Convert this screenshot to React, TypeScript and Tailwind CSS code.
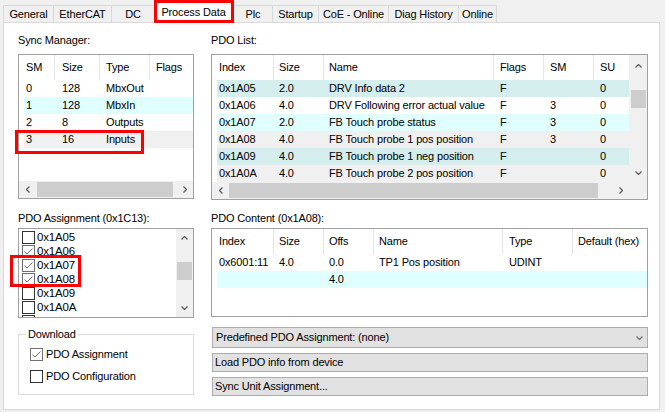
import React from 'react';

function ChevUp() {
  return (
    <svg width="7" height="4" viewBox="0 0 7 4" className="block">
      <path d="M0.5 3.5L3.5 0.5L6.5 3.5" fill="none" stroke="#606060" strokeWidth="1.3" />
    </svg>
  );
}
function ChevDown({ color = '#606060' }: { color?: string }) {
  return (
    <svg width="7" height="4" viewBox="0 0 7 4" className="block">
      <path d="M0.5 0.5L3.5 3.5L6.5 0.5" fill="none" stroke={color} strokeWidth="1.3" />
    </svg>
  );
}
function ChevLeft() {
  return (
    <svg width="4" height="7" viewBox="0 0 4 7" className="block">
      <path d="M3.5 0.5L0.5 3.5L3.5 6.5" fill="none" stroke="#606060" strokeWidth="1.3" />
    </svg>
  );
}
function ChevRight() {
  return (
    <svg width="4" height="7" viewBox="0 0 4 7" className="block">
      <path d="M0.5 0.5L3.5 3.5L0.5 6.5" fill="none" stroke="#606060" strokeWidth="1.3" />
    </svg>
  );
}

function Check({ checked }: { checked: boolean }) {
  return (
    <div
      className={
        checked
          ? 'w-[13px] h-[13px] border border-[#707070] bg-white flex items-center justify-center shrink-0'
          : 'w-[13px] h-[13px] border border-[#333333] bg-white flex items-center justify-center shrink-0'
      }
    >
      {checked && (
        <svg width="11" height="11" viewBox="0 0 11 11" className="block">
          <path d="M1.5 5.5L4 8L9.5 2.5" fill="none" stroke="#6e6e6e" strokeWidth="1" />
        </svg>
      )}
    </div>
  );
}

const tabs = [
  { label: 'General', cls: 'w-[50px]' },
  { label: 'EtherCAT', cls: 'w-[58px]' },
  { label: 'DC', cls: 'w-[43px]' },
  { label: 'Process Data', cls: 'w-[79px]', sel: true },
  { label: 'Plc', cls: 'w-[39px]' },
  { label: 'Startup', cls: 'w-[46px]' },
  { label: 'CoE - Online', cls: 'w-[70px]' },
  { label: 'Diag History', cls: 'w-[70px]' },
  { label: 'Online', cls: 'w-[39px] border-r' },
];

const smRows = [
  { sm: '0', size: '128', type: 'MbxOut', bg: 'bg-white' },
  { sm: '1', size: '128', type: 'MbxIn', bg: 'bg-[#e0ffff]' },
  { sm: '2', size: '8', type: 'Outputs', bg: 'bg-white' },
  { sm: '3', size: '16', type: 'Inputs', bg: 'bg-[#f0f0f0]' },
];

const pdoRows = [
  { idx: '0x1A05', size: '2.0', name: 'DRV Info data 2', flags: 'F', sm: '', su: '0', bg: 'bg-[#d4eded]' },
  { idx: '0x1A06', size: '4.0', name: 'DRV Following error actual value', flags: 'F', sm: '3', su: '0', bg: 'bg-white' },
  { idx: '0x1A07', size: '2.0', name: 'FB Touch probe status', flags: 'F', sm: '3', su: '0', bg: 'bg-[#e0ffff]' },
  { idx: '0x1A08', size: '4.0', name: 'FB Touch probe 1 pos position', flags: 'F', sm: '3', su: '0', bg: 'bg-[#f0f0f0]' },
  { idx: '0x1A09', size: '4.0', name: 'FB Touch probe 1 neg position', flags: 'F', sm: '', su: '0', bg: 'bg-[#d4eded]' },
  { idx: '0x1A0A', size: '4.0', name: 'FB Touch probe 2 pos position', flags: 'F', sm: '', su: '0', bg: 'bg-[#f0f0f0]' },
];

const assign = [
  { id: '0x1A05', c: false },
  { id: '0x1A06', c: true },
  { id: '0x1A07', c: true },
  { id: '0x1A08', c: true },
  { id: '0x1A09', c: false },
  { id: '0x1A0A', c: false },
  { id: '', c: false },
];

const hc = 'flex items-center border-r border-[#e5e5e5] whitespace-nowrap';

export default function App() {
  return (
    <div className="w-[665px] h-[412px] bg-[#f0f0f0] text-[11px] leading-[13px] tracking-[-0.15px] text-black overflow-hidden relative font-['Liberation_Sans',Arial,sans-serif]">
      {/* Tabs */}
      <div className="flex items-end h-[22px] pl-[3px]">
        {tabs.map((t) =>
          t.sel ? (
            <div
              key={t.label}
              className={`${t.cls} h-[22px] -mb-px bg-white border border-b-0 border-[#d9d9d9] relative z-10 flex items-center justify-center whitespace-nowrap pb-[1px]`}
            >
              {t.label}
            </div>
          ) : (
            <div
              key={t.label}
              className={`${t.cls} h-[17px] bg-[#f0f0f0] border-t border-l border-[#d9d9d9] flex items-center justify-center whitespace-nowrap`}
            >
              {t.label}
            </div>
          )
        )}
      </div>

      {/* Panel */}
      <div className="ml-[3px] w-[657px] h-[388px] border border-[#d9d9d9] bg-white pl-[14px] pt-[11px]">
        <div className="grid grid-cols-[176px_437px] gap-x-[17px] items-start">
          {/* Row 1 labels */}
          <div>Sync Manager:</div>
          <div>PDO List:</div>

          {/* Row 2 lists */}
          <div className="mt-[7px] h-[145px] border border-[#a0a0a0] bg-white flex flex-col">
            <div className="h-[25px] flex shrink-0">
              <div className={`w-[36px] pl-[7px] ${hc}`}>SM</div>
              <div className={`w-[45px] pl-[7px] ${hc}`}>Size</div>
              <div className={`w-[50px] pl-[6px] ${hc}`}>Type</div>
              <div className="flex-1 pl-[6px] flex items-center">Flags</div>
            </div>
            {smRows.map((r) => (
              <div key={r.sm} className={`ml-[5px] h-[17px] flex items-center shrink-0 ${r.bg}`}>
                <div className="w-[31px] pl-[2px]">{r.sm}</div>
                <div className="w-[45px] pl-[7px]">{r.size}</div>
                <div className="w-[50px] pl-[6px]">{r.type}</div>
                <div className="flex-1 pl-[6px]"></div>
              </div>
            ))}
            <div className="flex-1" />
            <div className="h-[17px] flex bg-[#f0f0f0] shrink-0">
              <div className="w-[17px] flex items-center justify-center">
                <ChevLeft />
              </div>
              <div className="flex-1 flex items-center">
                <div className="ml-[1px] w-[136px] h-[15px] bg-[#cdcdcd]" />
              </div>
              <div className="w-[17px] flex items-center justify-center">
                <ChevRight />
              </div>
            </div>
          </div>

          <div className="mt-[7px] h-[146px] border border-[#a0a0a0] bg-white flex flex-col">
            <div className="flex h-[127px] shrink-0">
              <div className="flex-1 flex flex-col overflow-hidden">
                <div className="h-[25px] flex shrink-0">
                  <div className={`w-[62px] pl-[7px] ${hc}`}>Index</div>
                  <div className={`w-[50px] pl-[5px] ${hc}`}>Size</div>
                  <div className={`w-[170px] pl-[5px] ${hc}`}>Name</div>
                  <div className={`w-[50px] pl-[6px] ${hc}`}>Flags</div>
                  <div className={`w-[50px] pl-[6px] ${hc}`}>SM</div>
                  <div className="flex-1 pl-[6px] flex items-center">SU</div>
                </div>
                {pdoRows.map((r) => (
                  <div key={r.idx} className={`ml-[5px] h-[17px] flex items-center shrink-0 whitespace-nowrap ${r.bg}`}>
                    <div className="w-[57px] pl-[2px]">{r.idx}</div>
                    <div className="w-[50px] pl-[5px]">{r.size}</div>
                    <div className="w-[170px] pl-[5px]">{r.name}</div>
                    <div className="w-[50px] pl-[6px]">{r.flags}</div>
                    <div className="w-[50px] pl-[6px]">{r.sm}</div>
                    <div className="flex-1 pl-[6px]">{r.su}</div>
                  </div>
                ))}
              </div>
              <div className="w-[18px] bg-[#f0f0f0] flex flex-col items-center pt-[9px] pb-[7px]">
                <ChevUp />
                <div className="mt-[22px] w-[15px] h-[18px] bg-[#cdcdcd]" />
                <div className="flex-1" />
                <ChevDown />
              </div>
            </div>
            <div className="flex-1 flex">
              <div className="flex-1 flex bg-[#f0f0f0]">
                <div className="w-[17px] flex items-center justify-center">
                  <ChevLeft />
                </div>
                <div className="flex-1 flex items-center">
                  <div className="w-[369px] h-[15px] bg-[#cdcdcd]" />
                </div>
                <div className="w-[17px] flex items-center justify-center">
                  <ChevRight />
                </div>
              </div>
              <div className="w-[18px] bg-[#f0f0f0]" />
            </div>
          </div>

          {/* Row 3 labels */}
          <div className="mt-[12px]">PDO Assignment (0x1C13):</div>
          <div className="mt-[12px]">PDO Content (0x1A08):</div>

          {/* Row 4 lists */}
          <div className="mt-[3px] h-[90px] border border-[#a0a0a0] bg-white flex">
            <div className="flex-1 overflow-hidden pt-[1px]">
              {assign.map((a, i) => (
                <div key={i} className="h-[14px] flex items-center pl-[3px]">
                  <Check checked={a.c} />
                  {a.id && <span className="ml-[2px] text-[11.5px]">{a.id}</span>}
                </div>
              ))}
            </div>
            <div className="w-[17px] bg-[#f0f0f0] flex flex-col items-center pt-[7px] pb-[7px]">
              <ChevUp />
              <div className="mt-[22px] w-[15px] h-[18px] bg-[#cdcdcd]" />
              <div className="flex-1" />
              <ChevDown />
            </div>
          </div>

          <div className="mt-[3px] h-[89px] border border-[#a0a0a0] bg-white flex flex-col">
            <div className="h-[25px] flex shrink-0">
              <div className={`w-[62px] pl-[7px] ${hc}`}>Index</div>
              <div className={`w-[50px] pl-[5px] ${hc}`}>Size</div>
              <div className={`w-[50px] pl-[5px] ${hc}`}>Offs</div>
              <div className={`w-[129px] pl-[5px] ${hc}`}>Name</div>
              <div className={`w-[70px] pl-[6px] ${hc}`}>Type</div>
              <div className="flex-1 pl-[5px] flex items-center whitespace-nowrap">Default (hex)</div>
            </div>
            <div className="ml-[5px] h-[17px] flex items-center bg-white whitespace-nowrap">
              <div className="w-[57px] pl-[2px]">0x6001:11</div>
              <div className="w-[50px] pl-[5px]">4.0</div>
              <div className="w-[50px] pl-[5px]">0.0</div>
              <div className="w-[129px] pl-[5px]">TP1 Pos position</div>
              <div className="w-[70px] pl-[6px]">UDINT</div>
              <div className="flex-1 pl-[5px]"></div>
            </div>
            <div className="ml-[5px] h-[17px] flex items-center bg-[#e0ffff] whitespace-nowrap">
              <div className="w-[57px] pl-[2px]"></div>
              <div className="w-[50px] pl-[5px]"></div>
              <div className="w-[50px] pl-[5px]">4.0</div>
              <div className="flex-1"></div>
            </div>
          </div>

          {/* Row 5 bottom */}
          <div className="mt-[16px] h-[61px] border border-[#dcdcdc] relative pt-[13px]">
            <div className="absolute -top-[7px] left-[7px] bg-white px-[2px] leading-[13px]">Download</div>
            <div className="flex items-center pl-[11px] h-[13px]">
              <Check checked={true} />
              <span className="ml-[3px]">PDO Assignment</span>
            </div>
            <div className="flex items-center pl-[11px] h-[13px] mt-[9px]">
              <Check checked={false} />
              <span className="ml-[3px]">PDO Configuration</span>
            </div>
          </div>

          <div className="mt-[9px] ml-[1px] flex flex-col">
            <div className="h-[21px] border border-[#adadad] bg-[#e1e1e1] flex items-center justify-between pl-[3px] pr-[4px]">
              <span>Predefined PDO Assignment: (none)</span>
              <ChevDown color="#707070" />
            </div>
            <div className="mt-[5px] h-[19px] border border-[#adadad] bg-[#e1e1e1] flex items-center pl-[2px]">
              Load PDO info from device
            </div>
            <div className="mt-[5px] h-[19px] border border-[#adadad] bg-[#e1e1e1] flex items-center pl-[2px]">
              Sync Unit Assignment...
            </div>
          </div>
        </div>
      </div>

      {/* Red annotation boxes */}
      <div className="absolute left-[154px] top-0 w-[80px] h-[23px] border-[3px] border-[#ff0000] z-20 pointer-events-none" />
      <div className="absolute left-[15px] top-[130px] w-[129px] h-[24px] border-[3px] border-[#ff0000] z-20 pointer-events-none" />
      <div className="absolute left-[10px] top-[255px] w-[71px] h-[32px] border-[3px] border-[#ff0000] z-20 pointer-events-none" />
    </div>
  );
}
